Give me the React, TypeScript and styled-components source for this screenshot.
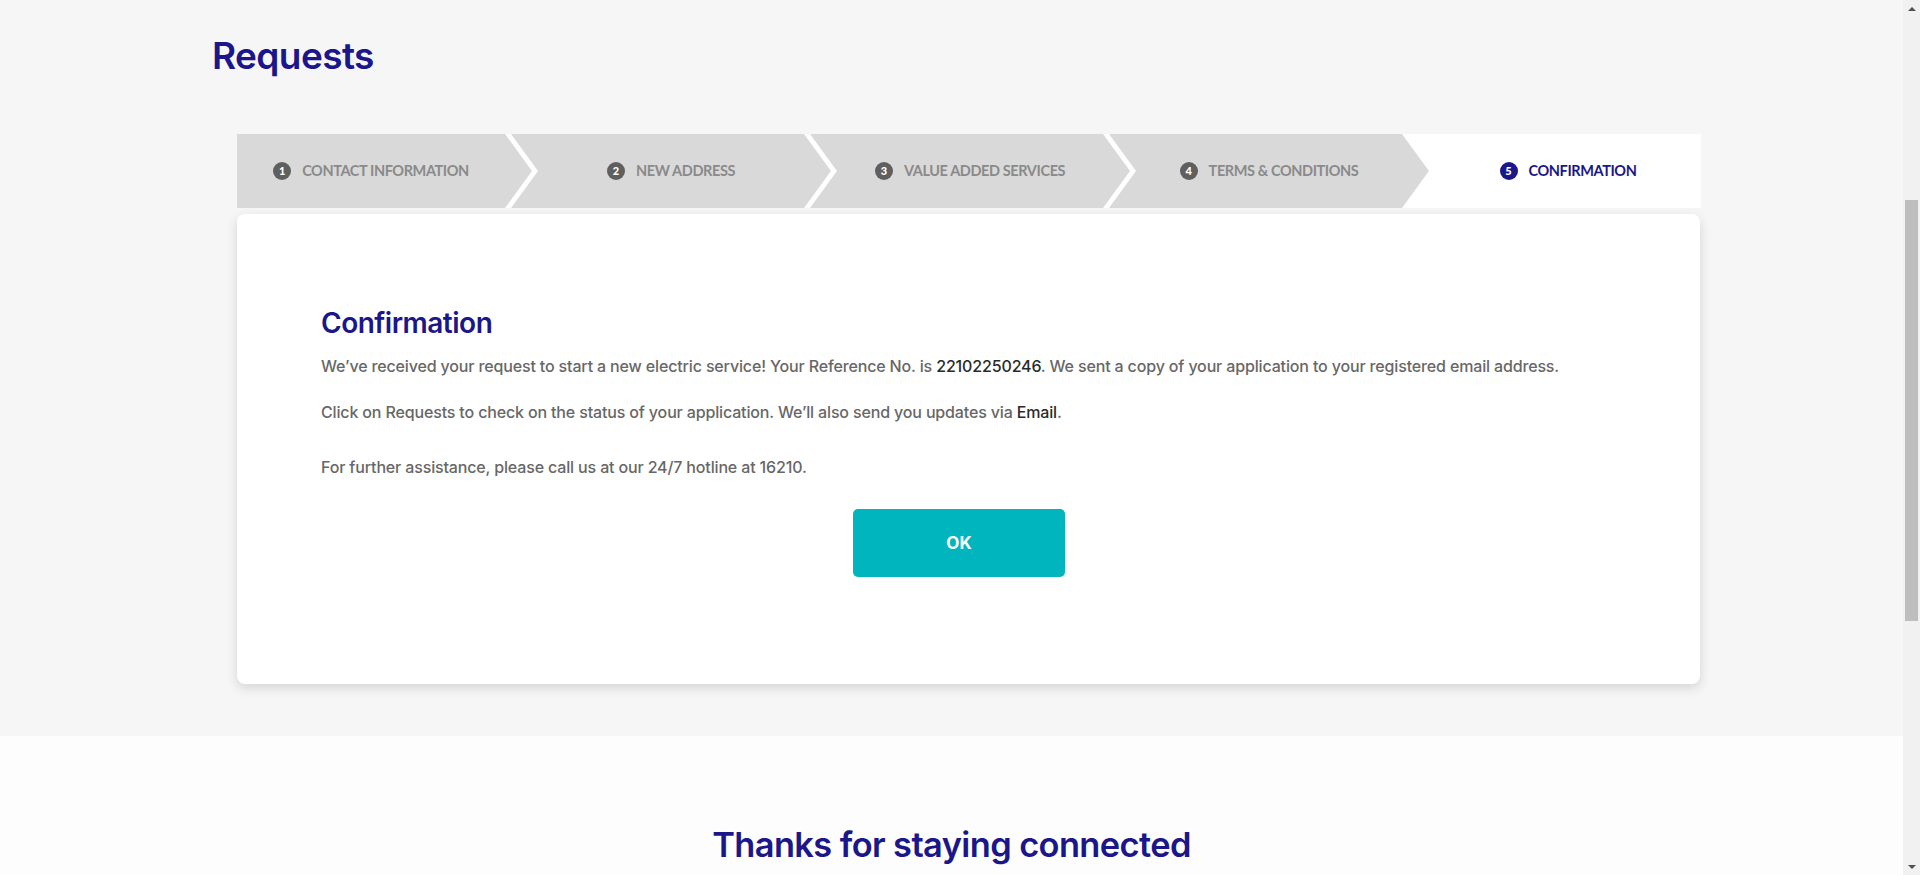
import React from "react";
import styled, { createGlobalStyle } from "styled-components";

const GlobalStyle = createGlobalStyle`
  html, body {
    margin: 0;
    padding: 0;
    height: 875px;
    overflow: hidden;
    background: #f6f6f6;
  }
  * { box-sizing: border-box; }
  body {
    font-family: "Inter", "Noto Sans", sans-serif;
  }
`;

const NAVY = "#1b1689";

const Viewport = styled.div`
  display: flex;
  height: 875px;
  width: 1920px;
  overflow: hidden;
`;

const Page = styled.div`
  flex: 1;
  display: flex;
  flex-direction: column;
  overflow: hidden;
`;

const TopSection = styled.section`
  background: #f6f6f6;
  padding: 33px 0 52px 212px;
`;

const PageTitle = styled.h1`
  margin: 0;
  font-size: 37px;
  line-height: 46px;
  font-weight: 600;
  color: ${NAVY};
  letter-spacing: -0.6px;
`;

const Stepper = styled.div`
  display: flex;
  width: 1463px;
  height: 74px;
  margin: 55px 0 6px 25px;
  background: #fff;
`;

type Pos = "first" | "middle" | "last";

const clips: Record<Pos, string> = {
  first:
    "polygon(0 0, calc(100% - 27px) 0, 100% 50%, calc(100% - 27px) 100%, 0 100%)",
  middle:
    "polygon(0 0, calc(100% - 27px) 0, 100% 50%, calc(100% - 27px) 100%, 0 100%, 27px 50%)",
  last: "polygon(0 0, 100% 0, 100% 100%, 0 100%, 27px 50%)",
};

const widths: Record<Pos, string> = {
  first: "295px",
  middle: "320px",
  last: "293px",
};

const Step = styled.div<{ $pos: Pos; $active?: boolean }>`
  flex: 0 0 ${(p) => widths[p.$pos]};
  margin-left: ${(p) => (p.$pos === "first" ? "0" : "-21px")};
  clip-path: ${(p) => clips[p.$pos]};
  background: ${(p) => (p.$active ? "#ffffff" : "#d9d9d9")};
  display: flex;
  align-items: center;
  justify-content: center;
  gap: 11px;
  padding: ${(p) =>
    p.$pos === "first" ? "0 27px 0 0" : p.$pos === "last" ? "0 0 0 27px" : "0 27px"};
  padding-bottom: 1px;
`;

const StepNum = styled.span<{ $active?: boolean }>`
  width: 18px;
  height: 18px;
  border-radius: 50%;
  background: ${(p) => (p.$active ? NAVY : "#5f5f5f")};
  color: #fff;
  font-family: "Lato", sans-serif;
  font-size: 11px;
  font-weight: 900;
  display: flex;
  align-items: center;
  justify-content: center;
  line-height: 1;
`;

const StepLabel = styled.span<{ $active?: boolean }>`
  font-family: "Lato", "Noto Sans", sans-serif;
  font-size: 14.5px;
  font-weight: 700;
  letter-spacing: -0.4px;
  color: ${(p) => (p.$active ? NAVY : "#8a8a8a")};
  text-transform: uppercase;
  white-space: nowrap;
`;

const Card = styled.div`
  width: 1463px;
  margin-left: 25px;
  background: #fff;
  border-radius: 8px;
  box-shadow: 0 4px 12px rgba(0, 0, 0, 0.14);
  padding: 92px 103px 107px 84px;
  display: flex;
  flex-direction: column;
`;

const CardTitle = styled.h2`
  margin: 0 0 14px;
  font-size: 28px;
  line-height: 34px;
  font-weight: 600;
  color: ${NAVY};
  letter-spacing: -0.5px;
`;

const Para = styled.p<{ $gap: number }>`
  margin: 0 0 ${(p) => p.$gap}px;
  font-size: 16px;
  line-height: 24px;
  font-weight: 500;
  color: #676767;
  letter-spacing: -0.15px;
`;

const Strong = styled.span`
  color: #2a2a2a;
`;

const OkButton = styled.button`
  align-self: center;
  width: 212px;
  height: 68px;
  margin-top: 30px;
  border: none;
  border-radius: 5px;
  background: #00b5bd;
  color: #fff;
  font-family: inherit;
  font-size: 17px;
  font-weight: 700;
  cursor: pointer;
`;

const BottomSection = styled.section`
  flex: 1;
  background: #fdfdfd;
  padding-top: 87px;
  display: flex;
  justify-content: center;
`;

const Thanks = styled.h2`
  margin: 0;
  font-size: 34.4px;
  line-height: 44px;
  font-weight: 600;
  color: ${NAVY};
  letter-spacing: -0.6px;
`;

const Scrollbar = styled.div`
  flex: 0 0 17px;
  background: #f1f1f1;
  display: flex;
  flex-direction: column;
  align-items: center;
`;

const Arrow = styled.div<{ $down?: boolean }>`
  flex: 0 0 17px;
  display: flex;
  align-items: center;
  justify-content: center;
  &::after {
    content: "";
    width: 0;
    height: 0;
    border-left: 4px solid transparent;
    border-right: 4px solid transparent;
    ${(p) =>
      p.$down
        ? "border-top: 4px solid #505050;"
        : "border-bottom: 4px solid #505050;"}
  }
`;

const Track = styled.div`
  flex: 1;
  align-self: stretch;
  padding: 183px 2px 0;
`;

const Thumb = styled.div`
  height: 421px;
  background: #bebebe;
`;

const steps = [
  "Contact Information",
  "New Address",
  "Value Added Services",
  "Terms & Conditions",
  "Confirmation",
];

export default function App() {
  return (
    <>
      <GlobalStyle />
      <Viewport>
        <Page>
          <TopSection>
            <PageTitle>Requests</PageTitle>
            <Stepper>
              {steps.map((s, i) => {
                const pos: Pos =
                  i === 0 ? "first" : i === steps.length - 1 ? "last" : "middle";
                const active = i === steps.length - 1;
                return (
                  <Step key={s} $pos={pos} $active={active}>
                    <StepNum $active={active}>{i + 1}</StepNum>
                    <StepLabel $active={active}>{s}</StepLabel>
                  </Step>
                );
              })}
            </Stepper>
            <Card>
              <CardTitle>Confirmation</CardTitle>
              <Para $gap={22}>
                We’ve received your request to start a new electric service! Your
                Reference No. is <Strong>22102250246</Strong>. We sent a copy of
                your application to your registered email address.
              </Para>
              <Para $gap={31}>
                Click on Requests to check on the status of your application.
                We’ll also send you updates via <Strong>Email</Strong>.
              </Para>
              <Para $gap={0}>
                For further assistance, please call us at our 24/7 hotline at
                16210.
              </Para>
              <OkButton>OK</OkButton>
            </Card>
          </TopSection>
          <BottomSection>
            <Thanks>Thanks for staying connected</Thanks>
          </BottomSection>
        </Page>
        <Scrollbar>
          <Arrow />
          <Track>
            <Thumb />
          </Track>
          <Arrow $down />
        </Scrollbar>
      </Viewport>
    </>
  );
}
